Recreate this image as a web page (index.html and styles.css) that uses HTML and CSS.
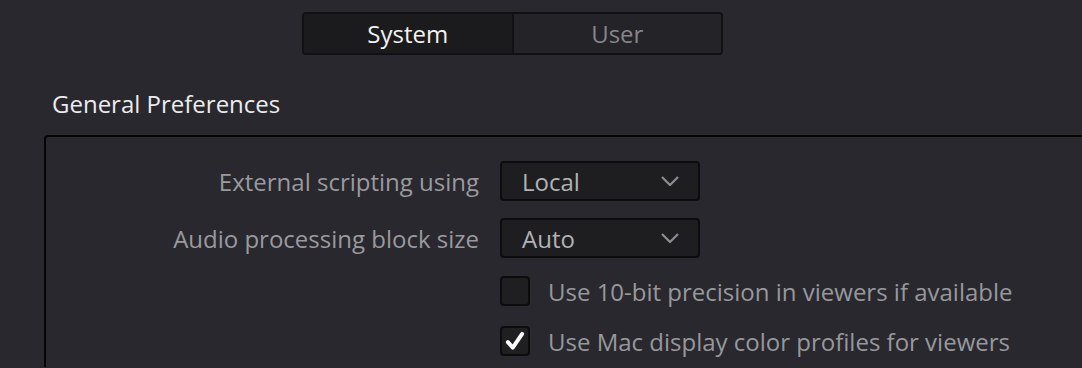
FILE: index.html
```html
<!DOCTYPE html>
<html lang="en">
<head>
  <meta charset="UTF-8" />
  <title>Preferences</title>
  <link rel="stylesheet" href="styles.css">
</head>
<body>
  <div class="tabs">
    <button class="tab active">System</button>
    <button class="tab">User</button>
  </div>

  <h2 class="section-title">General Preferences</h2>

  <div class="panel">
    <div class="row select-row">
      <span class="label">External scripting using</span>
      <div class="select">
        <span>Local</span>
        <svg viewBox="0 0 18 10" class="chevron"><polyline points="1,1 9,9 17,1"/></svg>
      </div>
    </div>
    <div class="row select-row">
      <span class="label">Audio processing block size</span>
      <div class="select">
        <span>Auto</span>
        <svg viewBox="0 0 18 10" class="chevron"><polyline points="1,1 9,9 17,1"/></svg>
      </div>
    </div>
    <div class="row check-row">
      <span class="label"></span>
      <label class="check">
        <span class="box"></span>
        Use 10-bit precision in viewers if available
      </label>
    </div>
    <div class="row check-row">
      <span class="label"></span>
      <label class="check">
        <span class="box checked">
          <svg viewBox="0 0 20 20"><path d="M3.5 11 L8 16 L16.5 3.5"/></svg>
        </span>
        Use Mac display color profiles for viewers
      </label>
    </div>
  </div>
</body>
</html>
```

FILE: styles.css
```css
body {
  margin: 0;
  background: #28282e;
  font-family: "Open Sans", "Noto Sans", sans-serif;
  overflow: hidden;
}
/* Sekmeler */
.tabs {
  display: flex;
  width: 421px;
  height: 43px;
  margin: 12px 0 0 302px;
  border: 2px solid #111113;
  border-radius: 4px;
  box-sizing: border-box;
  overflow: hidden;
}
.tab {
  flex: 1;
  border: none;
  margin: 0;
  padding: 0;
  background: #232328;
  color: #85858a;
  font-family: inherit;
  font-size: 24px;
  line-height: 39px;
}
.tab.active {
  background: #1b1b1e;
  color: #f2f2f2;
  border-right: 2px solid #111113;
}
.section-title {
  margin: 35px 0 0 52px;
  font-size: 24px;
  font-weight: normal;
  color: #ececec;
  line-height: 28px;
}
/* Panel */
.panel {
  margin: 17px 0 0 44px;
  border-top: 2px solid #050506;
  border-left: 2px solid #050506;
  border-top-left-radius: 4px;
  padding-top: 24px;
  height: 206px;
  overflow: hidden;
}
.row {
  display: grid;
  grid-template-columns: 433px auto;
  column-gap: 21px;
  align-items: center;
}
.select-row {
  height: 40px;
  margin-bottom: 17px;
}
.check-row {
  height: 40px;
  margin-bottom: 10px;
}
.select-row + .check-row {
  margin-top: -4px;
}
.label {
  text-align: right;
  color: #9a9a9d;
  font-size: 24px;
  white-space: nowrap;
}
.select {
  width: 200px;
  height: 40px;
  box-sizing: border-box;
  border: 2px solid #0c0c0d;
  border-radius: 4px;
  background: #1e1e21;
  display: flex;
  align-items: center;
  justify-content: space-between;
  padding: 0 19px 0 20px;
  color: #b2b2b4;
  font-size: 24px;
}
.chevron {
  width: 18px;
  height: 10px;
  fill: none;
  stroke: #8d8d90;
  stroke-width: 2.2;
}
.check {
  display: flex;
  align-items: center;
  gap: 18px;
  color: #98989b;
  font-size: 24px;
  white-space: nowrap;
}
.box {
  width: 30px;
  height: 30px;
  box-sizing: border-box;
  border: 2px solid #0c0c0d;
  border-radius: 4px;
  background: #1f1f22;
  display: flex;
  align-items: center;
  justify-content: center;
  flex: none;
}
.box svg {
  width: 22px;
  height: 22px;
  fill: none;
  stroke: #fff;
  stroke-width: 3.6;
  stroke-linecap: round;
  stroke-linejoin: round;
}
```
